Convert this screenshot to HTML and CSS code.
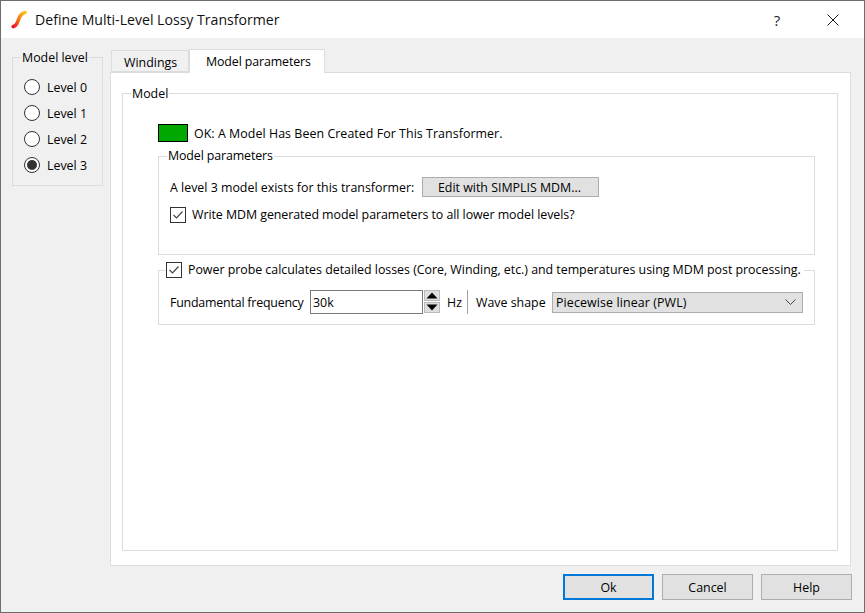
FILE: index.html
```html
<!DOCTYPE html>
<html lang="en">
<head>
<meta charset="utf-8">
<title>Define Multi-Level Lossy Transformer</title>
<link rel="stylesheet" href="styles.css">
</head>
<body>
<div class="window">
  <header class="titlebar">
    <svg class="app-icon" width="16" height="19" viewBox="0 0 16 19">
      <defs><linearGradient id="s" x1="0" y1="1" x2="1" y2="0"><stop offset="0" stop-color="#f0102a"/><stop offset=".45" stop-color="#f5701a"/><stop offset="1" stop-color="#fbc81a"/></linearGradient></defs>
      <path d="M2.2 16.6 C5.8 15.8 6.5 13 7.4 10 C8.4 6.5 9.5 3.2 14 2.4" fill="none" stroke="url(#s)" stroke-width="3.6" stroke-linecap="round"/>
    </svg>
    <span class="title">Define Multi-Level Lossy Transformer</span>
    <span class="help-btn">?</span>
    <svg class="close-btn" width="12" height="12" viewBox="0 0 12 12"><path d="M.5.5l11 11M11.5.5l-11 11" stroke="#1a1a1a" fill="none"/></svg>
  </header>
  <main class="main">
    <fieldset class="group levels">
      <legend>Model level</legend>
      <div class="radio"><span class="dot"></span><span class="lbl">Level 0</span></div>
      <div class="radio"><span class="dot"></span><span class="lbl">Level 1</span></div>
      <div class="radio"><span class="dot"></span><span class="lbl">Level 2</span></div>
      <div class="radio"><span class="dot on"></span><span class="lbl">Level 3</span></div>
    </fieldset>
    <section class="tabs">
      <nav class="tabbar">
        <span class="tab">Windings</span>
        <span class="tab active">Model parameters</span>
      </nav>
      <div class="pane">
        <fieldset class="group model">
          <legend>Model</legend>
          <div class="status"><span class="swatch"></span><span class="lbl status-text">OK: A Model Has Been Created For This Transformer.</span></div>
          <fieldset class="group params">
            <legend>Model parameters</legend>
            <div class="row"><span class="exists lbl">A level 3 model exists for this transformer:</span><button class="btn edit">Edit with SIMPLIS MDM...</button></div>
            <label class="check-row">
              <svg class="check" width="16" height="16" viewBox="0 0 16 16"><rect x=".5" y=".5" width="15" height="15" fill="#fff" stroke="#333"/><path d="M3.5 8l3 3 6-6.5" fill="none" stroke="#444" stroke-width="1.2"/></svg>
              <span class="write-text">Write MDM generated model parameters to all lower model levels?</span>
            </label>
          </fieldset>
          <fieldset class="group probe">
            <legend class="probe-legend">
              <svg class="check" width="16" height="16" viewBox="0 0 16 16"><rect x=".5" y=".5" width="15" height="15" fill="#fff" stroke="#333"/><path d="M3.5 8l3 3 6-6.5" fill="none" stroke="#444" stroke-width="1.2"/></svg>
              <span class="probe-text">Power probe calculates detailed losses (Core, Winding, etc.) and temperatures using MDM post processing.</span>
            </legend>
            <div class="freq-row">
              <span class="freq-label lbl">Fundamental frequency</span>
              <input class="freq" value="30k" readonly>
              <span class="spin">
                <svg width="16" height="11" viewBox="0 0 16 11"><rect width="16" height="11" fill="#dedede"/><rect x=".5" y=".5" width="15" height="10" fill="none" stroke="#bbb"/><path d="M8 2.5l5.5 6h-11z" fill="#000"/></svg>
                <svg width="16" height="11" viewBox="0 0 16 11"><rect width="16" height="11" fill="#dedede"/><rect x=".5" y=".5" width="15" height="10" fill="none" stroke="#bbb"/><path d="M8 8.5l-5.5-6h11z" fill="#000"/></svg>
              </span>
              <span class="hz lbl">Hz</span>
              <span class="divider"></span>
              <span class="wave-label lbl">Wave shape</span>
              <span class="combo"><span class="lbl combo-text">Piecewise linear (PWL)</span>
                <svg width="11" height="6" viewBox="0 0 11 6"><path d="M.5.5l5 5 5-5" fill="none" stroke="#444"/></svg>
              </span>
            </div>
          </fieldset>
        </fieldset>
      </div>
    </section>
  </main>
  <footer class="footer">
    <button class="btn action default">Ok</button>
    <button class="btn action">Cancel</button>
    <button class="btn action">Help</button>
  </footer>
</div>
</body>
</html>
```
FILE: styles.css
```css
* { box-sizing: border-box; }
html, body { margin: 0; padding: 0; }
body {
  width: 865px; height: 613px; overflow: hidden;
  font: 12.4px/16px "Open Sans", "Noto Sans", sans-serif;
  color: #000;
}
.window {
  width: 865px; height: 613px;
  border: 1px solid #6e6e6e;
  background: #f0f0f0;
  display: flex; flex-direction: column;
}
.lbl { padding-top: 2px; }
.titlebar {
  height: 37px; background: #fff;
  display: flex; align-items: center;
  padding-left: 10px;
}
.app-icon { flex: none; }
.title { font-size: 14.1px; margin-left: 8px; flex: 1; color: #111; }
.help-btn { font-size: 15px; width: 14px; text-align: center; color: #222; }
.close-btn { margin: 0 25px 0 43px; }
.main {
  flex: 1; display: flex;
  padding: 11px 13px 0 11px;
  align-items: flex-start;
}
.group {
  margin: 0; min-width: 0;
  border: 1px solid #dcdcdc;
}
.group legend { padding: 0 1px; height: 16px; line-height: 18px; white-space: nowrap; }
.levels {
  width: 91px; height: 137px; flex: none;
  margin-right: 7px; padding: 0 0 0 11px;
}
.levels legend { margin-left: -3px; }
.radio {
  height: 16px; margin-top: 10px;
  display: flex; align-items: center;
}
.levels legend + .radio { margin-top: 14px; }
.dot {
  width: 16px; height: 16px; margin-right: 7px;
  border: 1px solid #333; border-radius: 50%;
  background: #fff; flex: none;
  display: flex; align-items: center; justify-content: center;
}
.dot.on::after {
  content: ""; width: 10px; height: 10px;
  border-radius: 50%; background: #333;
}
.tabs { width: 741px; flex: none; }
.tabbar { height: 23px; display: flex; align-items: flex-end; padding-left: 1px; position: relative; z-index: 1; }
.tab {
  height: 22px; width: 78px; padding: 4px 0 0 12px;
  background: #f0f0f0; border: 1px solid #dcdcdc;
}
.tab.active {
  height: 24px; width: 136px; padding: 4px 0 0 16px; margin-bottom: -1px;
  background: #fff; border-bottom: 0; border-left: 1px solid #dcdcdc;
  letter-spacing: -.12px;
}
.pane {
  height: 494px; background: #fff;
  border: 1px solid #dcdcdc;
  padding: 12px 12px 0 11px;
}
.model { height: 466px; padding: 23px 22px 0 35px; }
.model > legend { margin-left: -27px; }
.status { display: flex; align-items: center; height: 18px; }
.status-text { letter-spacing: .06px; }
.swatch { width: 30px; height: 18px; background: #00a800; border: 1px solid #000; margin-right: 6px; }
.params { margin-top: 6px; padding: 13px 0 31px 11px; }
.group.params legend { margin-left: -3px; letter-spacing: -.12px; line-height: 16px; }
.row { display: flex; align-items: center; height: 20px; }
.exists { width: 252px; flex: none; white-space: nowrap; }
.btn {
  font: inherit; color: #000; background: #e1e1e1;
  border: 1px solid #adadad; padding: 2px 0 0; border-radius: 0;
}
.edit { width: 177px; height: 20px; padding-right: 2px; }
.check-row { display: flex; align-items: center; margin-top: 10px; height: 16px; }
.write-text { letter-spacing: -.05px; }
.check { margin-right: 6px; flex: none; }
.probe { margin-top: 7px; padding: 12px 11px 10px 11px; }
.group .probe-legend { margin-left: -4px; padding: 0 3px 0 0; display: flex; align-items: center; }
.probe-text { letter-spacing: -.02px; }
.freq-row { display: flex; align-items: center; height: 24px; }
.freq-label { width: 140px; flex: none; white-space: nowrap; letter-spacing: -.2px; }
.freq {
  width: 113px; height: 24px; flex: none;
  font: inherit; border: 1px solid #7a7a7a; padding: 1px 0 0 2px;
  color: #000; background: #fff; outline: none;
}
.spin { display: flex; flex-direction: column; justify-content: space-between; height: 24px; margin-left: 1px; width: 16px; padding: 0 0 1px; }
.spin svg { display: block; }
.hz { margin-left: 7px; width: 20px; }
.divider { width: 1px; height: 24px; background: #a0a0a0; margin-right: 8px; }
.wave-label { width: 76px; flex: none; white-space: nowrap; }
.combo {
  width: 251px; height: 21px; background: #e1e1e1;
  border: 1px solid #adadad; padding-left: 3px;
  display: flex; align-items: center; justify-content: space-between;
}
.combo-text { letter-spacing: .12px; }
.combo svg { margin-right: 6px; }
.footer {
  display: flex; justify-content: flex-end; gap: 8px;
  padding: 8px 12px 12px 0;
}
.action { width: 91px; height: 26px; }
.default { border: 2px solid #0078d7; }
```
